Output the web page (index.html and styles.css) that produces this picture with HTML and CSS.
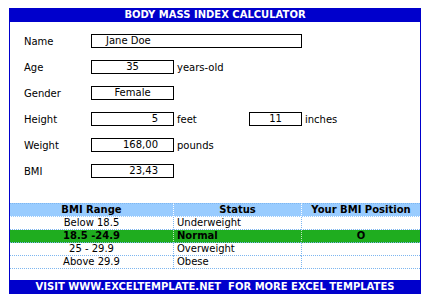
FILE: index.html
```html
<!DOCTYPE html>
<html>
<head>
<meta charset="utf-8">
<link rel="stylesheet" href="styles.css">
</head>
<body>
<div class="frame">
  <div class="bar">BODY MASS INDEX CALCULATOR</div>
  <div class="form">
    <div class="row"><span class="label">Name</span><span class="box w-name left">Jane Doe</span></div>
    <div class="row"><span class="label">Age</span><span class="box w-short center">35</span><span class="unit">years-old</span></div>
    <div class="row"><span class="label">Gender</span><span class="box w-short center">Female</span></div>
    <div class="row"><span class="label">Height</span><span class="box w-short right">5</span><span class="unit feet">feet</span><span class="box w-inch center">11</span><span class="unit">inches</span></div>
    <div class="row"><span class="label">Weight</span><span class="box w-short right">168,00</span><span class="unit">pounds</span></div>
    <div class="row"><span class="label">BMI</span><span class="box w-short right">23,43</span></div>
  </div>
  <table class="bmi">
    <thead>
      <tr><th class="c1">BMI Range</th><th class="c2">Status</th><th class="c3">Your BMI Position</th></tr>
    </thead>
    <tbody>
      <tr><td class="c1">Below 18.5</td><td class="c2">Underweight</td><td class="c3"></td></tr>
      <tr class="hit"><td class="c1">18.5 -24.9</td><td class="c2">Normal</td><td class="c3">O</td></tr>
      <tr><td class="c1">25 - 29.9</td><td class="c2">Overweight</td><td class="c3"></td></tr>
      <tr><td class="c1">Above 29.9</td><td class="c2">Obese</td><td class="c3"></td></tr>
    </tbody>
  </table>
  <div class="bar foot">VISIT WWW.EXCELTEMPLATE.NET&nbsp; FOR MORE EXCEL TEMPLATES</div>
</div>
</body>
</html>
```

FILE: styles.css
```css
html, body {
  margin: 0;
  padding: 0;
  background: #fff;
}
body {
  font-family: "DejaVu Sans", Verdana, sans-serif;
  font-size: 10px;
  color: #000;
}
.frame {
  box-sizing: border-box;
  width: 412px;
  margin: 8px 0 0 9px;
  border-left: 1px solid #0000cc;
  border-right: 1px solid #0000cc;
}
.bar {
  background: #0000cc;
  color: #fff;
  font-weight: bold;
  height: 14px;
  line-height: 14px;
  text-align: center;
  margin: 0 -1px;
  white-space: nowrap;
}
.foot {
  margin-top: 11px;
}
.form {
  display: flex;
  flex-direction: column;
  gap: 12px;
  padding: 12px 0 0 14px;
}
.row {
  display: flex;
  align-items: center;
  height: 14px;
}
.label {
  width: 67px;
  flex: none;
}
.box {
  box-sizing: border-box;
  height: 14px;
  line-height: 12px;
  border: 1px solid #000;
  flex: none;
  white-space: nowrap;
}
.w-name { width: 211px; }
.w-short { width: 83px; }
.w-inch { width: 53px; }
.left { padding-left: 14px; }
.center { text-align: center; }
.right { text-align: right; padding-right: 15px; }
.unit { margin-left: 3px; }
.feet { width: 72px; margin-left: 3px; flex: none; }

.bmi {
  width: 410px;
  margin-top: 25px;
  border-collapse: separate;
  border-spacing: 0;
  table-layout: fixed;
}
.bmi th, .bmi td {
  height: 12px;
  line-height: 12px;
  padding: 0;
  border-bottom: 1px dotted #7db6f0;
  white-space: nowrap;
}
.bmi th {
  background: #99ccff;
  font-weight: bold;
  border-top: 1px dotted #7db6f0;
  border-bottom-color: #ffffff;
}
.bmi .c1 { width: 163px; text-align: center; }
.bmi .c2 { width: 124px; text-align: left; padding-left: 3px; border-left: 1px dotted #7db6f0; }
.bmi .c3 { text-align: center; border-left: 1px dotted #7db6f0; }
.bmi th.c2 { text-align: center; padding-left: 0; width: 127px; border-left-color: #fff; }
.bmi th.c3 { border-left-color: #fff; }
.bmi .hit td {
  background: #1fad1f;
  font-weight: bold;
  border-left-color: #bfe3bf;
}
.bmi .hit td.c1 { border-left: none; }
```
